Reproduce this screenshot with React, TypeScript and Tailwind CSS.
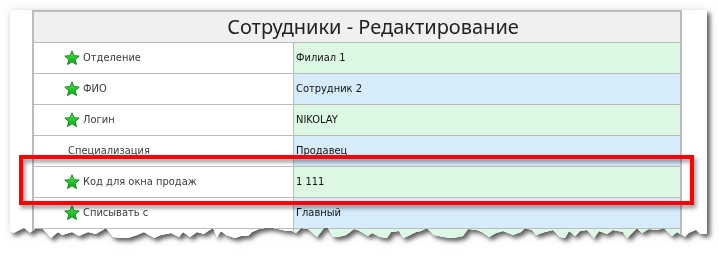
import React from "react";

function Star() {
  return (
    <svg width="16" height="16" viewBox="0 0 16 16" className="shrink-0">
      <defs>
        <linearGradient id="sg" x1="0" y1="0" x2="0" y2="1">
          <stop offset="0" stopColor="#5ee85e" />
          <stop offset="0.55" stopColor="#22c52a" />
          <stop offset="1" stopColor="#129a1c" />
        </linearGradient>
      </defs>
      <polygon
        points="8,0.8 10,5.65 15.23,6.05 11.23,9.45 12.47,14.55 8,11.8 3.53,14.55 4.77,9.45 0.77,6.05 6,5.65"
        fill="url(#sg)"
        stroke="#1a8a22"
        strokeWidth="1"
        strokeLinejoin="round"
      />
    </svg>
  );
}

type Row = { label: string; value: string; star: boolean; tone: "g" | "b" };

const rows: Row[] = [
  { label: "Отделение", value: "Филиал 1", star: true, tone: "g" },
  { label: "ФИО", value: "Сотрудник 2", star: true, tone: "b" },
  { label: "Логин", value: "NIKOLAY", star: true, tone: "g" },
  { label: "Специализация", value: "Продавец", star: false, tone: "b" },
  { label: "Код для окна продаж", value: "1 111", star: true, tone: "g" },
  { label: "Списывать с", value: "Главный", star: true, tone: "b" },
  { label: "", value: "", star: false, tone: "g" },
];

function tornClip(): string {
  const W = 697;
  const base = 218;
  let seed = 7;
  const rnd = () => {
    seed = (seed * 9301 + 49297) % 233280;
    return seed / 233280;
  };
  const pts: string[] = ["0px 0px", `${W}px 0px`, `${W}px ${base + 6}px`];
  let x = W;
  while (x > 0) {
    x -= 4 + Math.floor(rnd() * 7);
    if (x < 0) x = 0;
    const y = base + Math.floor(rnd() * 11);
    pts.push(`${x}px ${y}px`);
  }
  return `polygon(${pts.join(", ")})`;
}

export default function App() {
  const clip = tornClip();
  return (
    <div className="relative w-[719px] h-[257px] bg-white overflow-hidden">
      <div className="pl-[10px] pt-[10px] [filter:drop-shadow(3px_3px_2px_rgba(0,0,0,0.6))_drop-shadow(0_0_4px_rgba(0,0,0,0.12))]">
        <div
          className="w-[697px] h-[235px] bg-white pl-[22px] overflow-hidden"
          style={{ clipPath: clip }}
        >
          <div className="w-[650px] border-2 border-[#bcbcbc] bg-white">
            <div className="h-[31px] bg-[#f0f0f0] border-b border-[#bcbcbc] flex items-center justify-center pl-[32px]">
              <span className="text-[20px] text-[#222] [font-family:'Noto_Sans',sans-serif] leading-none">
                Сотрудники - Редактирование
              </span>
            </div>
            {rows.map((r, i) => (
              <div key={i} className="flex h-[31px] border-b border-[#bcbcbc]">
                <div
                  className={`w-[260px] shrink-0 flex items-center gap-[3px] border-r border-[#bcbcbc] bg-white ${
                    r.star ? "pl-[30px]" : "pl-[34px]"
                  }`}
                >
                  {r.star && <Star />}
                  <span className="text-[11px] text-[#3c3c3c] [font-family:'DejaVu_Sans_Condensed','DejaVu_Sans',sans-serif]">
                    {r.label}
                  </span>
                </div>
                <div
                  className={`flex-1 flex items-center pl-[2px] ${
                    r.tone === "g" ? "bg-[#dcf8e3]" : "bg-[#d6ecfb]"
                  }`}
                >
                  <span className="text-[11px] text-[#111] [font-family:'DejaVu_Sans_Condensed','DejaVu_Sans',sans-serif]">
                    {r.value}
                  </span>
                </div>
              </div>
            ))}
          </div>
        </div>
      </div>
      <div className="absolute left-[19px] top-[155px] w-[675px] h-[50px] border-4 border-[#ff0000] drop-shadow-[2px_3px_2px_rgba(0,0,0,0.45)]" />
    </div>
  );
}
